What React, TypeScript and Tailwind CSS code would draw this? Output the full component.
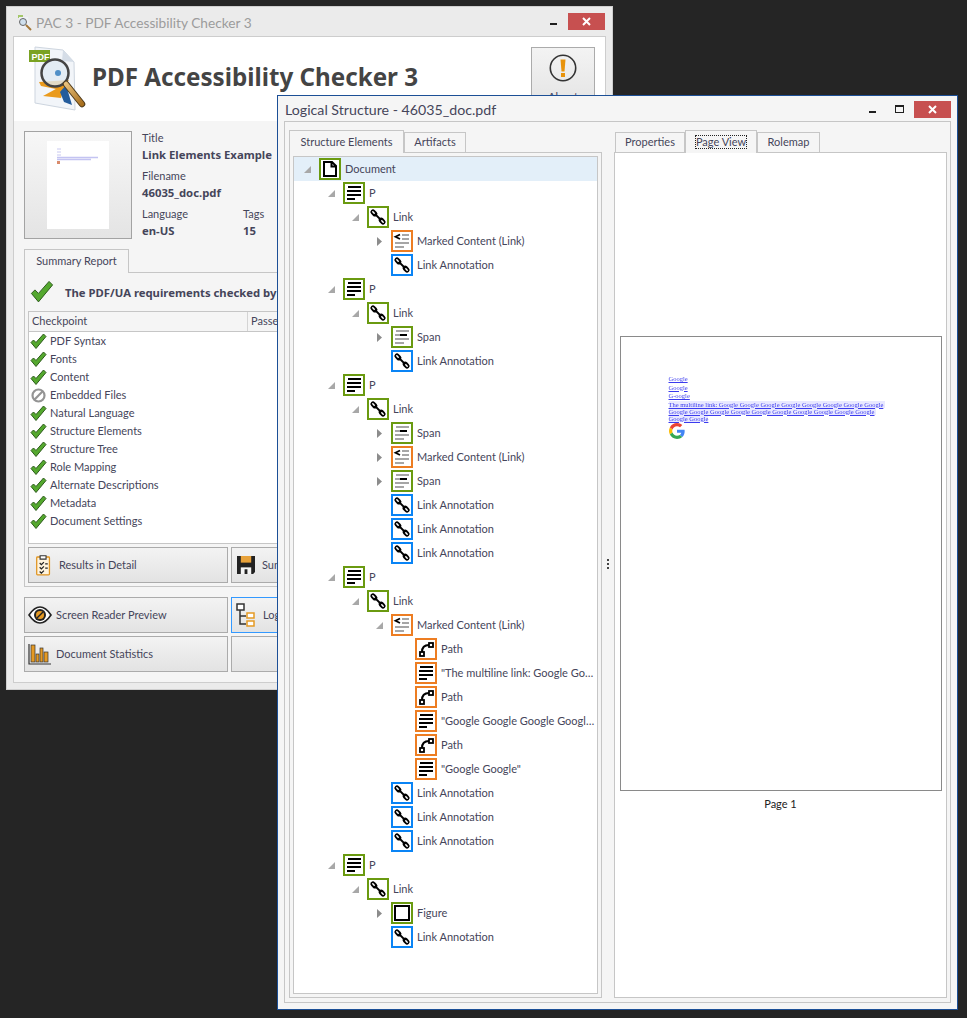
import type { ReactNode } from 'react'

type Kind = 'doc' | 'lines' | 'link' | 'marked' | 'span' | 'path' | 'figure'
type Row = { level: number; kind: Kind; color: string; label: string; arrow?: 'open' | 'closed' }

const GREEN = 'border-[#6a9a10]'
const ORANGE = 'border-[#ed7d22]'
const BLUE = 'border-[#0a84f5]'
const BOLD = "font-['Noto_Sans',sans-serif] text-[11.300px] font-bold"

const annotation = (level: number): Row => ({ level, kind: 'link', color: BLUE, label: 'Link Annotation' })
const para = (): Row => ({ level: 1, kind: 'lines', color: GREEN, label: 'P', arrow: 'open' })
const link = (): Row => ({ level: 2, kind: 'link', color: GREEN, label: 'Link', arrow: 'open' })
const marked = (arrow: 'open' | 'closed'): Row => ({ level: 3, kind: 'marked', color: ORANGE, label: 'Marked Content (Link)', arrow })
const span = (): Row => ({ level: 3, kind: 'span', color: GREEN, label: 'Span', arrow: 'closed' })
const path = (): Row => ({ level: 4, kind: 'path', color: ORANGE, label: 'Path' })
const textRow = (label: string): Row => ({ level: 4, kind: 'lines', color: ORANGE, label })

const rows: Row[] = [
  { level: 0, kind: 'doc', color: GREEN, label: 'Document', arrow: 'open' },
  para(), link(), marked('closed'), annotation(3),
  para(), link(), span(), annotation(3),
  para(), link(), span(), marked('closed'), span(), annotation(3), annotation(3), annotation(3),
  para(), link(), marked('open'),
  path(), textRow('"The multiline link: Google Go…'),
  path(), textRow('"Google Google Google Googl…'),
  path(), textRow('"Google Google"'),
  annotation(3), annotation(3), annotation(3),
  para(), link(),
  { level: 3, kind: 'figure', color: GREEN, label: 'Figure', arrow: 'closed' },
  annotation(3),
]

const checkpoints = [
  'PDF Syntax', 'Fonts', 'Content', 'Embedded Files', 'Natural Language', 'Structure Elements',
  'Structure Tree', 'Role Mapping', 'Alternate Descriptions', 'Metadata', 'Document Settings',
]

function TreeGlyph({ kind }: { kind: Kind }) {
  return (
    <svg width="18" height="18" viewBox="0 0 18 18">
      {kind === 'doc' && <path d="M3 2h8l4 4v10H3zM10.500 2v4.500H15" fill="none" stroke="#000" strokeWidth="2" />}
      {kind === 'lines' && (
        <g fill="#000">
          <rect x="3" y="2" width="13" height="2" /><rect x="2" y="6" width="14" height="2" />
          <rect x="2" y="10" width="14" height="2" /><rect x="2" y="14" width="8" height="2" />
        </g>
      )}
      {kind === 'link' && (
        <g fill="none" strokeLinecap="round">
          <path d="M6 6l6 6" stroke="#000" strokeWidth="1.800" />
          <path d="M4 4l1.800 1.800" stroke="#000" strokeWidth="5.200" />
          <path d="M12.200 12.200L14 14" stroke="#000" strokeWidth="5.200" />
          <path d="M3.800 3.800l1.400 1.400" stroke="#fff" strokeWidth="1.500" />
          <path d="M12.800 12.800l1.400 1.400" stroke="#fff" strokeWidth="1.500" />
        </g>
      )}
      {kind === 'marked' && (
        <g>
          <path d="M7 2.500L2.500 4.800 7 7" fill="none" stroke="#000" strokeWidth="1.800" />
          <g fill="#a6a6a6">
            <rect x="9" y="2" width="7" height="2" /><rect x="9" y="6" width="7" height="2" />
            <rect x="2" y="10" width="14" height="2" /><rect x="2" y="14" width="9" height="2" />
          </g>
        </g>
      )}
      {kind === 'span' && (
        <g>
          <g fill="#a6a6a6">
            <rect x="3" y="2" width="13" height="2" /><rect x="2" y="10" width="14" height="2" />
            <rect x="2" y="14" width="9" height="2" /><rect x="2" y="6" width="5" height="2" />
          </g>
          <rect x="7" y="6" width="7" height="2" fill="#000" />
        </g>
      )}
      {kind === 'path' && (
        <g fill="none" stroke="#000" strokeWidth="2">
          <rect x="3" y="12" width="4" height="4" strokeWidth="1.800" />
          <rect x="12" y="3" width="4" height="4" strokeWidth="1.800" />
          <path d="M5 12C5 7 7 5 12 5" />
        </g>
      )}
      {kind === 'figure' && <rect x="2" y="2" width="14" height="14" fill="none" stroke="#000" strokeWidth="2" />}
    </svg>
  )
}

function Arrow({ type }: { type: 'open' | 'closed' }) {
  return type === 'open' ? (
    <svg width="7" height="7" viewBox="0 0 7 7" className="ml-[2px]"><path d="M7 0v7H0z" fill="#a8a8a8" /></svg>
  ) : (
    <svg width="5" height="9" viewBox="0 0 5 9" className="ml-[3px]"><path d="M0 0l5 4.500-5 4.500z" fill="#8c8c8c" /></svg>
  )
}

function TreeRow({ row, selected }: { row: Row; selected: boolean }) {
  return (
    <div
      className={`flex h-[24px] items-center text-[#45455a] ${selected ? 'bg-[#e3eff9]' : ''}`}
      style={{ paddingLeft: 8 + row.level * 24 }}
    >
      <span className="flex w-[17px] shrink-0 items-center">{row.arrow && <Arrow type={row.arrow} />}</span>
      <span className={`flex h-[22px] w-[22px] shrink-0 items-center justify-center border-2 bg-white ${row.color}`}>
        <TreeGlyph kind={row.kind} />
      </span>
      <span className="ml-[4px] whitespace-nowrap">{row.label}</span>
    </div>
  )
}

function Check() {
  return (
    <svg width="17" height="17" viewBox="0 0 17 17" className="shrink-0">
      <path d="M1 9.500l2.500-2.500 2.500 2.500L13.500 1 16 3.500 6 15.500z" fill="#54a82e" stroke="#2d5a1c" strokeWidth="1" strokeLinejoin="round" />
    </svg>
  )
}

function Blocked() {
  return (
    <svg width="17" height="17" viewBox="0 0 17 17" className="shrink-0">
      <circle cx="8.500" cy="8.500" r="6" fill="none" stroke="#949494" strokeWidth="2.200" />
      <path d="M4.300 12.700l8.400-8.400" stroke="#949494" strokeWidth="2.200" />
    </svg>
  )
}

function ActionButton({ icon, label, labelGap, w, focused }: { icon?: ReactNode; label?: string; labelGap: string; w: string; focused?: boolean }) {
  return (
    <div
      className={`flex h-[36px] shrink-0 items-center whitespace-nowrap border bg-gradient-to-b from-[#f3f3f3] to-[#e3e3e3] text-[#45455a] ${w} ${
        focused ? 'border-[#3399ff]' : 'border-[#ababab]'
      }`}
    >
      {icon}
      {label && <span className={labelGap}>{label}</span>}
    </div>
  )
}

function TitleButtons({ max }: { max?: boolean }) {
  return (
    <div className="ml-auto flex items-start">
      <div className="mt-[10px] h-[2px] w-[7px] bg-[#1f1f1f]" />
      {max && <div className="ml-[19px] mt-[4px] h-[8px] w-[9px] border border-t-2 border-[#1f1f1f]" />}
      <div className={`flex h-[17px] w-[37px] items-center justify-center bg-[#c75050] ${max ? 'ml-[10px]' : 'ml-[11px] mr-[1px]'}`}>
        <svg width="9" height="9" viewBox="0 0 9 9"><path d="M1 1l7 7M8 1l-7 7" stroke="#fff" strokeWidth="2" /></svg>
      </div>
    </div>
  )
}

function Tab({ label, active, focus, w }: { label: string; active?: boolean; focus?: boolean; w: string }) {
  return (
    <div
      className={`flex items-center justify-center whitespace-nowrap border border-b-0 border-[#c6c6c6] bg-[#f5f5f5] text-[#45455a] ${w} ${
        active ? 'relative z-10 -mb-px h-[23px]' : 'h-[20px]'
      }`}
    >
      <span className={focus ? 'border border-dotted border-[#222] leading-[12px]' : ''}>{label}</span>
    </div>
  )
}

function Logo() {
  return (
    <svg width="58" height="66" viewBox="0 0 58 66" className="shrink-0">
      <defs>
        <linearGradient id="handle" x1="0" y1="0" x2="1" y2="1">
          <stop offset="0" stopColor="#e8c07a" /><stop offset="1" stopColor="#a86f1e" />
        </linearGradient>
      </defs>
      <path d="M6 1l28 3 11 12 1 48-40-7z" fill="#f2f5f9" stroke="#cdd5df" />
      <path d="M34 4l-1 11 12 1z" fill="#d5dde7" />
      <path d="M10 36l30-2-8 10-20-4z" fill="#ea9a1c" />
      <path d="M14 50l22-12-4 14z" fill="#ea9a1c" />
      <path d="M31 46l6-7 6 20-8-3z" fill="#245c9c" />
      <rect x="0" y="4" width="21" height="12" fill="#7aa222" />
      <text x="2.500" y="14" fontSize="9" fontWeight="700" fill="#fff" fontFamily="Liberation Sans, sans-serif">PDF</text>
      <circle cx="26" cy="27" r="13.500" fill="#dfeaf3" fillOpacity=".8" stroke="#444" strokeWidth="2.500" />
      <circle cx="29" cy="27" r="3" fill="#4f8fc7" />
      <path d="M37 38l16 20" stroke="#4d3a1c" strokeWidth="6.500" strokeLinecap="round" />
      <path d="M37 38l16 20" stroke="url(#handle)" strokeWidth="4.500" strokeLinecap="round" />
    </svg>
  )
}

function MainWindow() {
  return (
    <div className="absolute left-[6px] top-[6px] flex h-[684px] w-[607px] flex-col border border-[#cfcfcf] bg-[#ebebeb] px-[6px] pb-[6px]">
      <div className="flex h-[29px] shrink-0 items-start pt-[6px]">
        <svg width="18" height="18" viewBox="0 0 18 18" className="ml-[3px] mt-[1px]">
          <rect x="2" y="1" width="5" height="3" fill="#a4c76a" />
          <path d="M3 3h9l2 12-10-1z" fill="#eef1f5" />
          <circle cx="7" cy="8" r="3.500" fill="#cfe0ee" stroke="#666" />
          <path d="M10 11l5 5" stroke="#a5793a" strokeWidth="2" />
        </svg>
        <span className="ml-[2px] text-[13.700px] leading-[20px] text-[#9c9c9c]">PAC 3 - PDF Accessibility Checker 3</span>
        <TitleButtons />
      </div>
      <div className="flex flex-1 flex-col border border-[#cdcdcd] bg-[#f5f5f5]">
        <div className="flex h-[84px] shrink-0 items-start bg-white pl-[15px] pt-[9px]">
          <Logo />
          <h1 className="ml-[5px] mt-[16px] whitespace-nowrap font-['Noto_Sans',sans-serif] text-[24.200px] font-bold leading-[30px] text-[#444]">PDF Accessibility Checker 3</h1>
          <div className="ml-auto mr-[10px] mt-[1px] flex h-[64px] w-[64px] shrink-0 flex-col items-center border border-[#ababab] bg-gradient-to-b from-[#f3f3f3] to-[#e3e3e3] pt-[6px]">
            <svg width="28" height="28" viewBox="0 0 28 28" className="shrink-0">
              <circle cx="14" cy="14" r="12.700" fill="none" stroke="#333" strokeWidth="1.600" />
              <path d="M11.500 5.500h5l-1 12h-3z" fill="#e8930c" />
              <rect x="12" y="19" width="4" height="4" fill="#e8930c" />
            </svg>
            <span className="mt-[8px] leading-[14px] text-[#45455a]">About</span>
          </div>
        </div>
        <div className="flex flex-1 flex-col px-[10px] pt-[10px]">
          <div className="flex h-[108px] shrink-0">
            <div className="flex h-[108px] w-[108px] shrink-0 justify-center border border-[#a3a3a3] bg-gradient-to-b from-[#f7f7f7] to-[#e4e4e4] pt-[9px]">
              <svg width="62" height="88" viewBox="0 0 62 88" className="bg-white">
                <path d="M10 8h4M10 11h4M10 14h4" stroke="#c8c8f0" strokeWidth="1" />
                <path d="M10 16.500h41M10 18.500h34" stroke="#c4c4f2" strokeWidth="1.500" />
                <rect x="10" y="20" width="3" height="3" fill="#d98b6b" />
              </svg>
            </div>
            <div className="ml-[10px] flex flex-col text-[#45455a]">
              <span className="leading-[14px]">Title</span>
              <strong className={`mt-[1px] leading-[17px] ${BOLD}`}>Link Elements Example</strong>
              <span className="mt-[6px] leading-[14px]">Filename</span>
              <strong className={`mt-[1px] leading-[17px] ${BOLD}`}>46035_doc.pdf</strong>
              <div className="mt-[6px] flex">
                <div className="flex w-[101px] flex-col">
                  <span className="leading-[14px]">Language</span>
                  <strong className={`mt-[1px] leading-[17px] ${BOLD}`}>en-US</strong>
                </div>
                <div className="flex flex-col">
                  <span className="leading-[14px]">Tags</span>
                  <strong className={`mt-[1px] leading-[17px] ${BOLD}`}>15</strong>
                </div>
              </div>
            </div>
          </div>
          <div className="mt-[10px] flex h-[23px] shrink-0">
            <div className="relative z-10 flex h-[24px] w-[105px] items-center justify-center border border-b-0 border-[#c6c6c6] bg-[#f5f5f5] pb-[1px] text-[#45455a]">Summary Report</div>
          </div>
          <div className="flex h-[315px] shrink-0 flex-col border border-[#c6c6c6] px-[3px]">
            <div className="flex h-[38px] shrink-0 items-center pl-[1px]">
              <svg width="26" height="24" viewBox="0 0 17 17" className="shrink-0">
                <path d="M1 9.500l2.500-2.500 2.500 2.500L13.500 1 16 3.500 6 15.500z" fill="#54a82e" stroke="#2d5a1c" strokeWidth=".7" strokeLinejoin="round" />
              </svg>
              <strong className={`ml-[10px] mt-[2px] whitespace-nowrap text-[#45455a] ${BOLD}`}>The PDF/UA requirements checked by</strong>
            </div>
            <div className="flex h-[233px] shrink-0 flex-col border border-[#c6c6c6] bg-white">
              <div className="flex h-[20px] shrink-0 items-center border-b border-[#c6c6c6] bg-[#f5f5f5] text-[#45455a]">
                <div className="flex h-full w-[219px] items-center border-r border-[#d4d4d4] pl-[3px]">Checkpoint</div>
                <div className="pl-[3px]">Passed</div>
              </div>
              {checkpoints.map((c) => (
                <div key={c} className="flex h-[18px] shrink-0 items-center pl-[1px] text-[#45455a]">
                  {c === 'Embedded Files' ? <Blocked /> : <Check />}
                  <span className="ml-[3px]">{c}</span>
                </div>
              ))}
            </div>
            <div className="mt-[3px] flex gap-[3px]">
              <ActionButton label="Results in Detail" labelGap="ml-[7px]" w="w-[200px]" icon={
                <svg width="17" height="23" viewBox="0 0 20 26" className="ml-[6px]">
                  <rect x="2" y="3" width="15" height="21" rx="1" fill="#fff4de" stroke="#e09420" strokeWidth="1.500" />
                  <path d="M6 1.500h7v4H6z" fill="#fff" stroke="#333" strokeWidth="1.300" />
                  <path d="M5.500 10l2 2 3-3M5.500 15l2 2 3-3M5.500 20l2 2 3-3M12 11h3M12 16h3" fill="none" stroke="#222" strokeWidth="1.500" />
                </svg>
              } />
              <ActionButton label="Summary Report" labelGap="ml-[7px]" w="w-[200px]" icon={
                <svg width="18" height="18" viewBox="0 0 19 19" className="ml-[5px]">
                  <path d="M0 0h19v17l-2 2H0z" fill="#222" />
                  <rect x="4" y="0" width="11" height="7" fill="#e8a23a" />
                  <rect x="4" y="12" width="11" height="7" fill="#f5f5f5" />
                  <rect x="8" y="14" width="3" height="5" fill="#222" />
                </svg>
              } />
            </div>
          </div>
          <div className="mt-[10px] flex gap-[3px]">
            <ActionButton label="Screen Reader Preview" labelGap="ml-[4px]" w="w-[204px]" icon={
              <svg width="24" height="18" viewBox="0 0 24 18" className="ml-[3px]">
                <path d="M1 9c4-6 7-8 11-8s7 2 11 8c-4 6-7 8-11 8S5 15 1 9z" fill="#fff" stroke="#222" strokeWidth="1.600" />
                <circle cx="12" cy="9" r="6" fill="#222" />
                <circle cx="12" cy="9" r="4" fill="#e59a24" />
                <path d="M9 12l6-6" stroke="#222" strokeWidth="1.500" />
              </svg>
            } />
            <ActionButton label="Logical Structure" labelGap="ml-[4px]" w="w-[204px]" focused icon={
              <svg width="24" height="24" viewBox="0 0 24 24" className="ml-[3px]">
                <rect x="2" y="1" width="7" height="6" fill="#fff" stroke="#333" strokeWidth="1.500" />
                <path d="M5 7v14h6M5 13h6" fill="none" stroke="#333" strokeWidth="1.500" />
                <rect x="12" y="10" width="7" height="5" fill="#fff" stroke="#e59a24" strokeWidth="1.500" />
                <rect x="12" y="18" width="7" height="5" fill="#fff" stroke="#e59a24" strokeWidth="1.500" />
              </svg>
            } />
          </div>
          <div className="mt-[3px] flex gap-[3px]">
            <ActionButton label="Document Statistics" labelGap="ml-[4px]" w="w-[204px]" icon={
              <svg width="24" height="22" viewBox="0 0 24 22" className="ml-[3px]">
                <path d="M1 1v20h22" fill="none" stroke="#333" strokeWidth="1.200" />
                <g fill="#e59a24" stroke="#333" strokeWidth=".7">
                  <rect x="3" y="2" width="4" height="17" /><rect x="8" y="11" width="3" height="8" />
                  <rect x="12" y="5" width="3" height="14" /><rect x="16" y="9" width="4" height="10" />
                </g>
              </svg>
            } />
            <ActionButton labelGap="" w="w-[204px]" />
          </div>
        </div>
      </div>
    </div>
  )
}

function PagePreview() {
  return (
    <div className="flex flex-1 flex-col items-center pt-[183px]">
      <div className="h-[455px] w-[322px] border border-[#8a8a8a] bg-white pl-[48px] pt-[38px] font-['Liberation_Serif',serif] text-[6.500px] leading-[7px] text-[#3b3bee] underline blur-[0.3px]">
        <p className="h-[8.500px]">Google</p>
        <p className="h-[8.500px]">Google</p>
        <p className="h-[8.500px]">G-oogle</p>
        <p className="w-fit whitespace-nowrap bg-[#e8e8ff] pr-[2px]">The multiline link: Google Google Google Google Google Google Google Google</p>
        <p className="w-fit whitespace-nowrap bg-[#e8e8ff] pr-[2px]">Google Google Google Google Google Google Google Google Google Google</p>
        <p className="w-fit whitespace-nowrap bg-[#e8e8ff]">Google Google</p>
        <svg width="16" height="16" viewBox="0 0 48 48" className="mt-[1px]">
          <path fill="#EA4335" d="M24 9.500c3.500 0 6.700 1.300 9.100 3.500l6.800-6.800C35.800 2.400 30.300 0 24 0 14.600 0 6.500 5.400 2.600 13.200l7.900 6.100C12.400 13.700 17.700 9.500 24 9.500z" />
          <path fill="#4285F4" d="M47 24.500c0-1.600-.1-3.100-.4-4.500H24v9h12.900c-.6 3-2.200 5.500-4.700 7.200l7.700 6c4.500-4.200 7.100-10.300 7.100-17.700z" />
          <path fill="#FBBC05" d="M10.500 28.700C10 27.200 9.800 25.600 9.800 24s.3-3.200.7-4.700l-7.900-6.100C.9 16.500 0 20.100 0 24s.9 7.500 2.600 10.800l7.900-6.100z" />
          <path fill="#34A853" d="M24 48c6.500 0 11.900-2.100 15.900-5.800l-7.700-6c-2.200 1.400-5 2.300-8.200 2.300-6.300 0-11.600-4.200-13.500-9.800l-7.900 6.100C6.500 42.600 14.600 48 24 48z" />
        </svg>
      </div>
      <span className="mt-[5px] text-[#222]">Page 1</span>
    </div>
  )
}

function LogicalWindow() {
  return (
    <div className="absolute left-[277px] top-[95px] flex h-[915px] w-[681px] flex-col border border-[#1c4f96] bg-[#f5f5f5] px-[6px] pb-[6px]">
      <div className="flex h-[25px] shrink-0 items-start">
        <span className="ml-[1px] mt-[4px] text-[14.200px] leading-[20px] text-[#45455a]">Logical Structure - 46035_doc.pdf</span>
        <div className="ml-auto pt-[5px]"><TitleButtons max /></div>
      </div>
      <div className="flex flex-1 border border-[#c6c6c6] px-[4px] pb-[4px] pt-[8px]">
        <div className="flex w-[313px] shrink-0 flex-col">
          <div className="flex h-[22px] shrink-0 items-end">
            <Tab label="Structure Elements" active w="w-[115px]" />
            <Tab label="Artifacts" w="w-[62px]" />
          </div>
          <div className="flex flex-1 border border-[#c6c6c6] p-[3px]">
            <div className="flex-1 overflow-hidden border border-[#c6c6c6] bg-white">
              {rows.map((r, i) => <TreeRow key={i} row={r} selected={i === 0} />)}
            </div>
          </div>
        </div>
        <div className="flex w-[12px] shrink-0 flex-col items-center justify-center gap-[2px]">
          <div className="h-[2px] w-[2px] bg-[#444]" /><div className="h-[2px] w-[2px] bg-[#444]" /><div className="h-[2px] w-[2px] bg-[#444]" />
        </div>
        <div className="flex w-[333px] shrink-0 flex-col">
          <div className="flex h-[22px] shrink-0 items-end pl-px">
            <Tab label="Properties" w="w-[70px]" />
            <Tab label="Page View" active focus w="w-[72px]" />
            <Tab label="Rolemap" w="w-[63px]" />
          </div>
          <div className="flex flex-1 flex-col border border-[#c6c6c6] bg-white">
            <PagePreview />
          </div>
        </div>
      </div>
    </div>
  )
}

export default function App() {
  return (
    <div className="relative h-[1018px] w-[967px] overflow-hidden bg-[#252525] font-['Lato',sans-serif] text-[11px]">
      <MainWindow />
      <LogicalWindow />
    </div>
  )
}
